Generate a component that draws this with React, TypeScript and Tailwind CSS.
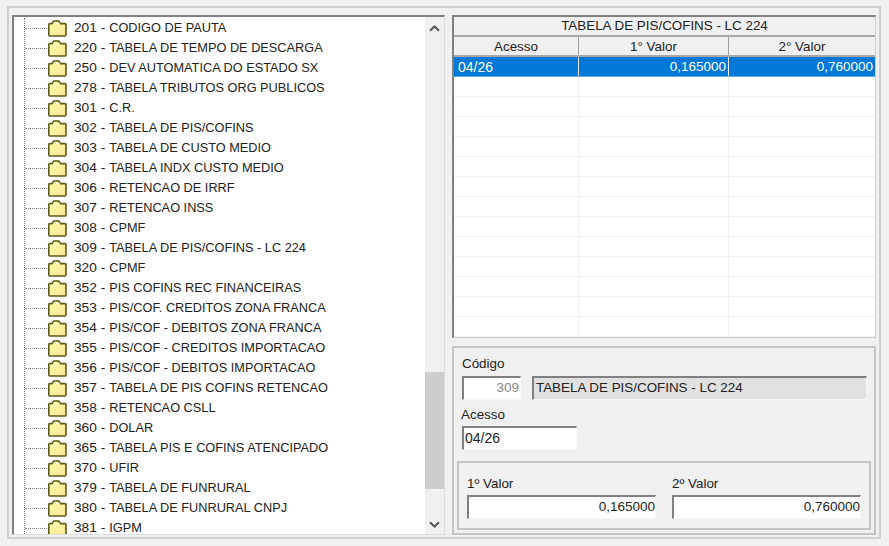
const treeItems = [
  ["201 -", "CODIGO DE PAUTA"],
  ["220 -", "TABELA DE TEMPO DE DESCARGA"],
  ["250 -", "DEV AUTOMATICA DO ESTADO SX"],
  ["278 -", "TABELA TRIBUTOS ORG PUBLICOS"],
  ["301 -", "C.R."],
  ["302 -", "TABELA DE PIS/COFINS"],
  ["303 -", "TABELA DE CUSTO MEDIO"],
  ["304 -", "TABELA INDX CUSTO MEDIO"],
  ["306 -", "RETENCAO DE IRRF"],
  ["307 -", "RETENCAO INSS"],
  ["308 -", "CPMF"],
  ["309 -", "TABELA DE PIS/COFINS - LC 224"],
  ["320 -", "CPMF"],
  ["352 -", "PIS COFINS REC FINANCEIRAS"],
  ["353 -", "PIS/COF. CREDITOS ZONA FRANCA"],
  ["354 -", "PIS/COF - DEBITOS ZONA FRANCA"],
  ["355 -", "PIS/COF - CREDITOS IMPORTACAO"],
  ["356 -", "PIS/COF - DEBITOS IMPORTACAO"],
  ["357 -", "TABELA DE PIS COFINS RETENCAO"],
  ["358 -", "RETENCAO CSLL"],
  ["360 -", "DOLAR"],
  ["365 -", "TABELA PIS E COFINS ATENCIPADO"],
  ["370 -", "UFIR"],
  ["379 -", "TABELA DE FUNRURAL"],
  ["380 -", "TABELA DE FUNRURAL CNPJ"],
  ["381 -", "IGPM"],
];

const emptyRows = Array.from({ length: 13 }, (_, i) => i);

function Folder() {
  return (
    <svg width="19" height="17" viewBox="0 0 19 17" className="ml-px shrink-0">
      <defs>
        <linearGradient id="folderFill" x1="0" y1="0" x2="1" y2="1">
          <stop offset="0" stopColor="#fffca6" />
          <stop offset="1" stopColor="#f8e596" />
        </linearGradient>
      </defs>
      <path
        d="M0.8 4.5 V15 Q0.8 16 1.8 16 H17 Q18 16 18 15 V4.5 Q18 3.6 17 3.6 H12.5 L10.8 1 H5.5 L4.2 3.6 H1.8 Q0.8 3.6 0.8 4.5 Z"
        fill="url(#folderFill)"
        stroke="#5a5a1c"
        strokeWidth="1.6"
        strokeLinejoin="round"
      />
      <path d="M5 3.4 H12" stroke="#fffde0" strokeWidth="1" />
    </svg>
  );
}

function Chevron({ down }: { down?: boolean }) {
  return (
    <svg width="11" height="7" viewBox="0 0 11 7">
      <path
        d={down ? "M1 1.2 L5.5 5.5 L10 1.2" : "M1 5.8 L5.5 1.5 L10 5.8"}
        fill="none"
        stroke="#555555"
        strokeWidth="2"
      />
    </svg>
  );
}

function Field({
  className,
  children,
}: {
  className: string;
  children?: React.ReactNode;
}) {
  return (
    <div
      className={`flex h-6 items-center border-t-2 border-l-2 border-r border-b border-t-[#808080] border-l-[#808080] border-r-[#f8f8f8] border-b-[#f8f8f8] ${className}`}
    >
      {children}
    </div>
  );
}

export default function App() {
  return (
    <div className="h-[546px] w-[889px] overflow-hidden bg-[#f0f0f0] pt-[6px] pl-[7px] font-['Liberation_Sans',sans-serif] text-[13.4px] text-[#222222]">
      <div className="flex h-[533px] w-[874px] gap-[7px] border-2 border-[#cfcfcf] px-[3px] pt-[7px]">
        {/* tree */}
        <div className="flex h-[520px] w-[433px] border-t-2 border-l-2 border-r border-b border-t-[#808080] border-l-[#808080] border-r-[#dcdcdc] border-b-[#dcdcdc] bg-white">
          <div className="h-full flex-1 overflow-hidden pt-px pl-[10px]">
            <div className="border-l border-dotted border-[#808080]">
              {treeItems.map(([code, name]) => (
                <div key={code} className="flex h-5 items-center whitespace-nowrap">
                  <div className="w-[22px] border-t border-dotted border-[#808080]" />
                  <Folder />
                  <span className="ml-[7px] leading-5 text-[13.7px]">{code}</span>
                  <span className="ml-[4px] leading-5 text-[12.75px]">{name}</span>
                </div>
              ))}
            </div>
          </div>
          <div className="flex h-full w-[19px] flex-col bg-[#f0f0f0]">
            <div className="flex h-[19px] items-center justify-center pt-1">
              <Chevron />
            </div>
            <div className="flex-1 pt-[336px] pb-[26px]">
              <div className="h-full bg-[#cdcdcd]" />
            </div>
            <div className="flex h-[19px] items-center justify-center">
              <Chevron down />
            </div>
          </div>
        </div>

        {/* right side */}
        <div className="flex w-[424px] flex-col">
          <div className="h-[323px] overflow-hidden border-t-2 border-l-2 border-r border-b border-t-[#808080] border-l-[#808080] border-r-[#cfcfcf] border-b-[#cfcfcf] bg-white">
            <div className="flex h-5 items-center justify-center border-b-2 border-[#a8a8a8] bg-[#f0f0f0] pt-px">
              TABELA DE PIS/COFINS - LC 224
            </div>
            <div className="flex h-5 border-b-2 border-[#a8a8a8] bg-[#f0f0f0] text-center leading-[19px]">
              <div className="w-[125px] border-r border-[#a0a0a0]">Acesso</div>
              <div className="w-[150px] border-r border-[#a0a0a0]">1° Valor</div>
              <div className="flex-1">2° Valor</div>
            </div>
            <div className="flex h-5 items-center border-b border-[#66aee6] bg-[#0078d7] text-[13.5px] text-white">
              <div className="h-full w-[125px] border-r border-[#e8e8e8] pl-[4px] text-[14px] leading-[20px]">04/26</div>
              <div className="h-full w-[150px] border-r border-[#e8e8e8] pr-[2px] text-right leading-[20px]">0,165000</div>
              <div className="h-full flex-1 pr-[2px] text-right leading-[20px]">0,760000</div>
            </div>
            {emptyRows.map((row) => (
              <div key={row} className="flex h-5 border-b border-[#f0f0f0]">
                <div className="w-[125px] border-r border-[#f0f0f0]" />
                <div className="w-[150px] border-r border-[#f0f0f0]" />
              </div>
            ))}
          </div>

          <div className="mt-[8px] h-[189px] border-2 border-[#c4c4c4] px-[8px] pt-[6px]">
            <div className="h-[22px] leading-5">Código</div>
            <div className="flex gap-[11px]">
              <Field className="w-[59px] justify-end bg-white pr-[1px] text-[13.5px] text-[#8a8a8a]">309</Field>
              <Field className="mr-[-1px] flex-1 bg-[#e0e0e0] pl-[2px]">TABELA DE PIS/COFINS - LC 224</Field>
            </div>
            <div className="mt-[5px] h-[21px] -ml-px leading-5">Acesso</div>
            <Field className="w-[115px] bg-white pl-[1px] text-[14px]">04/26</Field>
            <div className="mt-[11px] -ml-[5px] flex h-[69px] w-[414px] gap-[16px] border-2 border-[#c4c4c4] px-[8px] pt-[11px]">
              <div className="flex-1">
                <div className="h-[21px] leading-5">1º Valor</div>
                <Field className="justify-end bg-white text-[13.5px]">0,165000</Field>
              </div>
              <div className="flex-1">
                <div className="h-[21px] leading-5">2º Valor</div>
                <Field className="justify-end bg-white text-[13.5px]">0,760000</Field>
              </div>
            </div>
          </div>
        </div>
      </div>
    </div>
  );
}
